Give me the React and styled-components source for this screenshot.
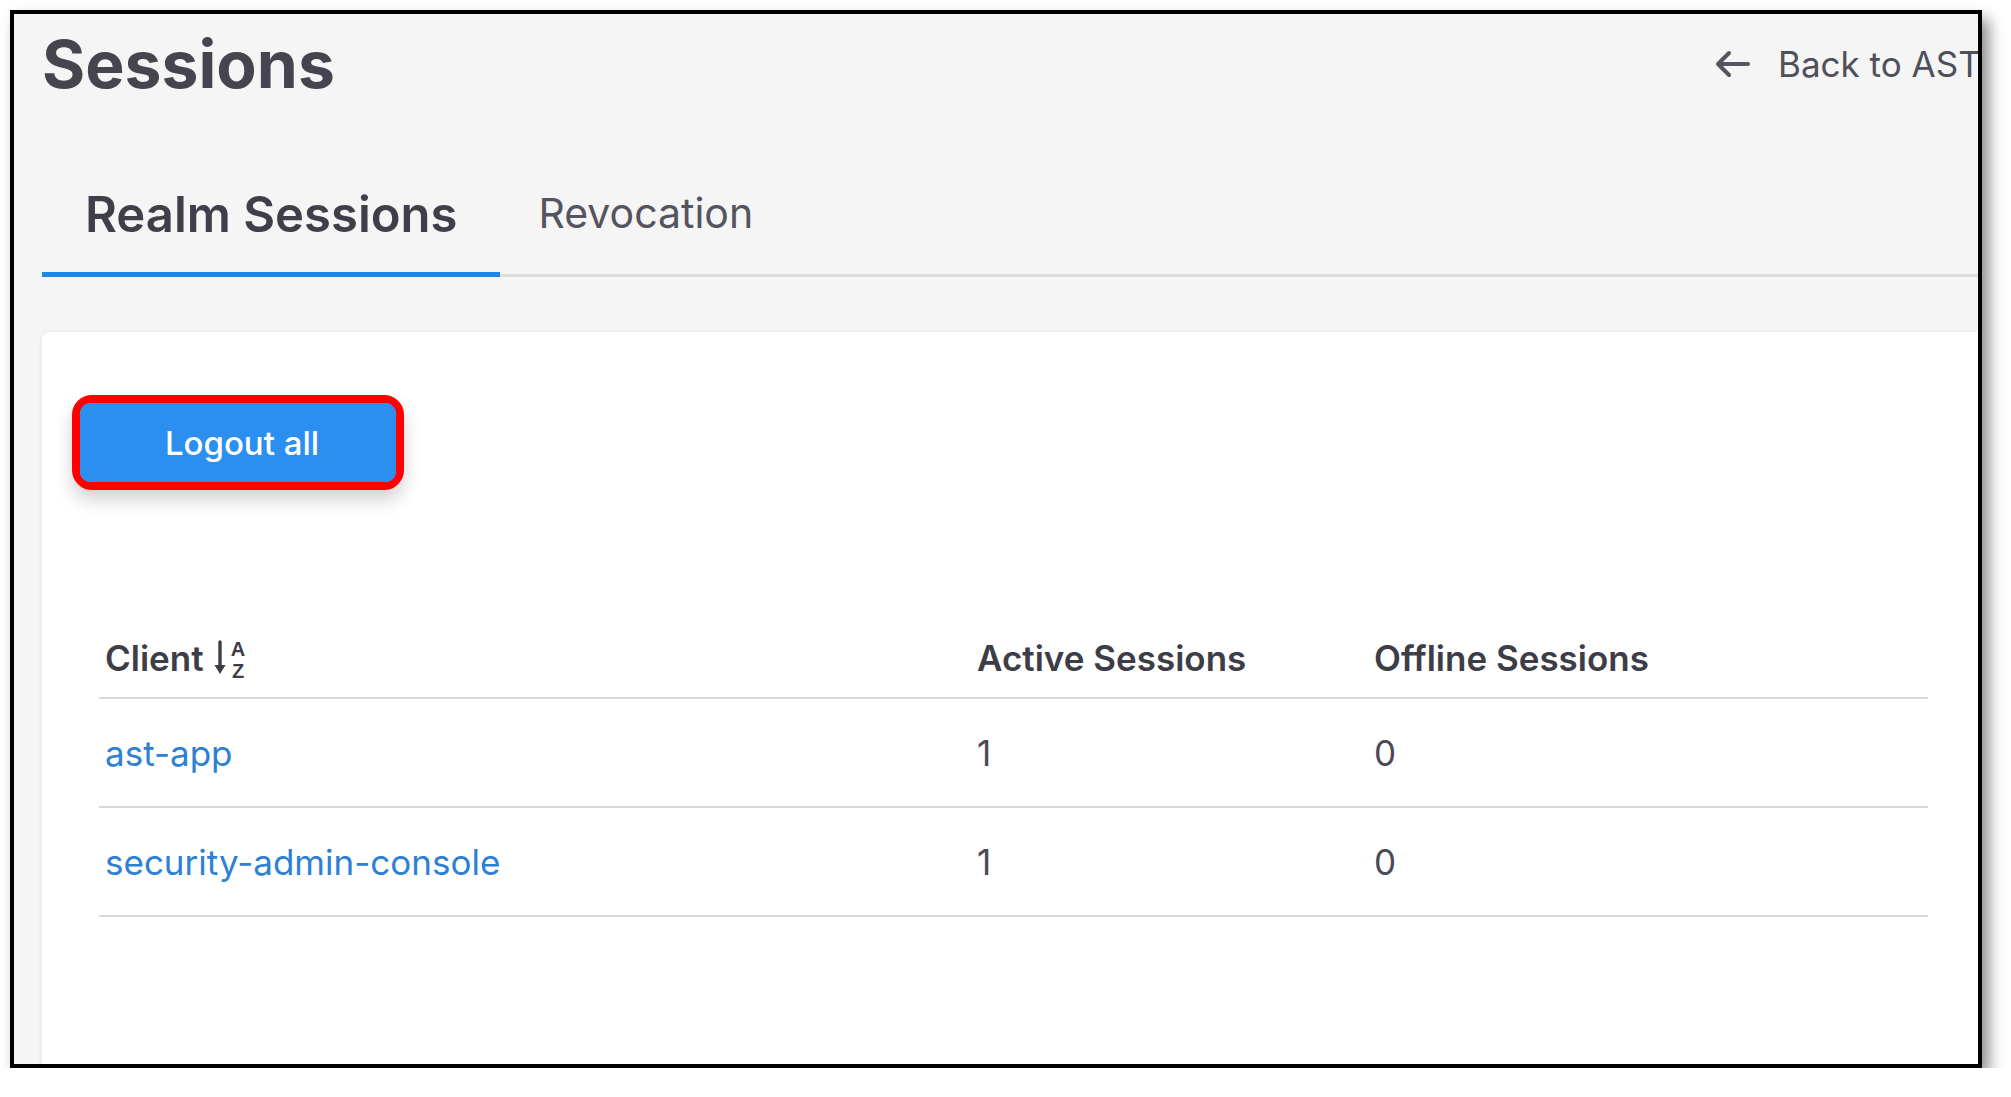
import styled, { createGlobalStyle } from "styled-components";

const GlobalStyle = createGlobalStyle`
    body {
        margin: 0;
        background: #fff;
        font-family: Inter, "Noto Sans", sans-serif;
    }
`;

const App = () => {
    return (
        <>
            <GlobalStyle />
            <Frame>
                <Page>
                    <Header>
                        <Title>Sessions</Title>
                        <BackLink href="#">
                            <ArrowIcon />
                            Back to AST
                        </BackLink>
                    </Header>
                    <TabBar>
                        <Tab $active>Realm Sessions</Tab>
                        <Tab>Revocation</Tab>
                    </TabBar>
                    <Card>
                        <Highlight>
                            <PrimaryBtn>Logout all</PrimaryBtn>
                        </Highlight>
                        <Table>
                            <HeadRow>
                                <HeadCell>
                                    Client
                                    <SortIcon />
                                </HeadCell>
                                <HeadCell>Active Sessions</HeadCell>
                                <HeadCell>Offline Sessions</HeadCell>
                            </HeadRow>
                            {rows.map((r) => (
                                <Row key={r.client}>
                                    <Cell><ClientLink href="#">{r.client}</ClientLink></Cell>
                                    <Cell>{r.active}</Cell>
                                    <Cell>{r.offline}</Cell>
                                </Row>
                            ))}
                        </Table>
                    </Card>
                </Page>
            </Frame>
        </>
    );
};

const rows = [
    { client: "ast-app", active: 1, offline: 0 },
    { client: "security-admin-console", active: 1, offline: 0 },
];

const ArrowIcon = () => (
    <svg width="36" height="28" viewBox="0 0 36 28" fill="none">
        <path d="M34 14H4M15 3L4 14l11 11" stroke="#55555f" strokeWidth="4" strokeLinecap="round" strokeLinejoin="round" />
    </svg>
);

// sort glyph: arrow down with A over Z
const SortIcon = () => (
    <SortSvg width="34" height="40" viewBox="0 0 34 40">
        <path d="M5 2v26" stroke="#3c3d46" strokeWidth="3.4" strokeLinecap="round" />
        <path d="M-0.5 25h11L5 34z" fill="#3c3d46" />
        <SortLetter x="23" y="16">A</SortLetter>
        <SortLetter x="23" y="38">Z</SortLetter>
    </SortSvg>
);

const Frame = styled.div`
    margin: 10px 0 0 10px;
    width: 1972px;
    height: 1058px;
    box-sizing: border-box;
    border: 4px solid #000;
    background: #f5f5f5;
    overflow: hidden;
    box-shadow: 7px 9px 14px rgba(0, 0, 0, 0.45);
`;
const Page = styled.div`
    width: 2010px;
    box-sizing: border-box;
    padding: 10px 0 0 28px;
`;
const Header = styled.div`
    display: flex;
    justify-content: space-between;
    align-items: center;
`;
const Title = styled.h1`
    margin: 0;
    font-size: 66px;
    font-weight: 700;
    color: #45454f;
`;
const BackLink = styled.a`
    display: flex;
    align-items: center;
    gap: 28px;
    font-size: 35px;
    color: #4f5059;
    text-decoration: none;
    white-space: nowrap;
    width: 310px;
`;
const TabBar = styled.div`
    display: flex;
    align-items: flex-end;
    margin-top: 81px;
    width: 1950px;
    border-bottom: 3px solid #dcdcdc;
`;
const Tab = styled.div`
    padding: 0 43px ${(p) => (p.$active ? "28px" : "34px")} ${(p) => (p.$active ? "43px" : "38px")};
    margin-bottom: -3px;
    font-size: ${(p) => (p.$active ? "49px" : "41px")};
    font-weight: ${(p) => (p.$active ? 600 : 400)};
    color: ${(p) => (p.$active ? "#3f3f49" : "#54545e")};
    border-bottom: 5px solid ${(p) => (p.$active ? "#1f87e5" : "transparent")};
`;
const Card = styled.div`
    margin-top: 55px;
    width: 1943px;
    height: 800px;
    box-sizing: border-box;
    padding: 63px 57px 0 30px;
    background: #fff;
    border-radius: 8px;
    box-shadow: 0 1px 5px rgba(0, 0, 0, 0.08);
`;
const Highlight = styled.div`
    display: inline-block;
    border: 8px solid #ff0000;
    border-radius: 20px;
    box-shadow: 0 10px 18px rgba(0, 0, 0, 0.18);
`;
const PrimaryBtn = styled.button`
    display: block;
    width: 316px;
    height: 79px;
    padding: 0 0 0 8px;
    border: none;
    border-radius: 10px;
    background: #2b8ff0;
    color: #fff;
    font-family: Inter, sans-serif;
    font-size: 33px;
    font-weight: 500;
`;
const Table = styled.div`
    margin: 146px 0 0 27px;
`;
const HeadRow = styled.div`
    display: grid;
    grid-template-columns: 872px 397px 1fr;
    padding-bottom: 17px;
    border-bottom: 2px solid #d8d8d8;
`;
const HeadCell = styled.div`
    display: flex;
    align-items: center;
    gap: 11px;
    padding-left: 6px;
    font-size: 35px;
    font-weight: 600;
    color: #3c3d46;
`;
const SortSvg = styled.svg`
    flex-shrink: 0;
    overflow: visible;
    margin-top: 4px;
`;
const SortLetter = styled.text`
    font-family: "Liberation Sans", Inter, sans-serif;
    font-size: 20px;
    font-weight: 700;
    fill: #3c3d46;
    text-anchor: middle;
`;
const Row = styled.div`
    display: grid;
    grid-template-columns: 872px 397px 1fr;
    align-items: center;
    height: 109px;
    box-sizing: border-box;
    border-bottom: 2px solid #d8d8d8;
`;
const Cell = styled.div`
    padding-left: 6px;
    font-size: 35px;
    color: #4a4a54;
`;
const ClientLink = styled.a`
    color: #2d80d3;
    text-decoration: none;
`;

export default App;
